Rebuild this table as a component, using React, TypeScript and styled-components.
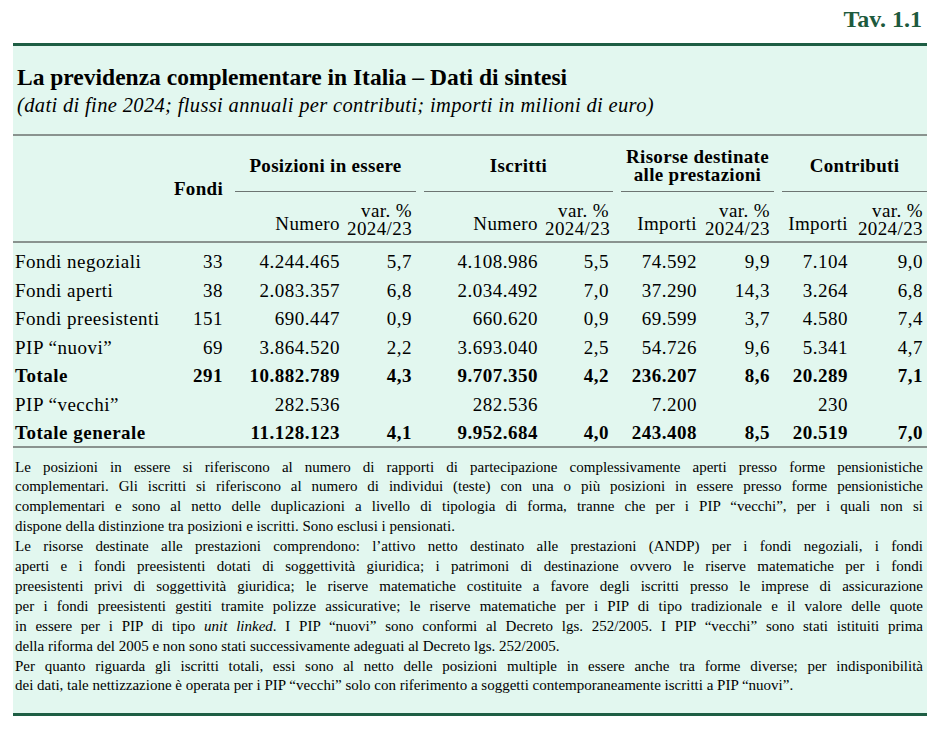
import React from "react";
import styled, { createGlobalStyle } from "styled-components";

const SERIF = `"Liberation Serif", "Times New Roman", Times, serif`;

const Global = createGlobalStyle`
  html, body { margin: 0; padding: 0; background: #ffffff; }
  body { font-family: ${SERIF}; color: #000; }
`;

const Page = styled.div`
  width: 914px;
  margin-left: 13px;
  padding-top: 5px;
  font-family: ${SERIF};
`;

const TavLabel = styled.div`
  text-align: right;
  padding-right: 5px;
  font-size: 24px;
  line-height: 28px;
  font-weight: 700;
  color: #1d5a3d;
  margin-bottom: 10px;
`;

const Panel = styled.section`
  background: #e2f7ef;
  border-top: 3px solid #1e5e44;
  border-bottom: 3px solid #1e5e44;
  padding-top: 18px;
`;

const Heading = styled.div`
  padding: 0 4px;
  margin-bottom: 17px;
`;

const Title = styled.h1`
  margin: 0;
  font-size: 23.5px;
  line-height: 26px;
  font-weight: 700;
`;

const Subtitle = styled.div`
  font-size: 20.5px;
  line-height: 24px;
  font-style: italic;
  letter-spacing: 0.35px;
  margin-top: 3px;
`;

const Table = styled.table`
  width: 914px;
  table-layout: fixed;
  border-collapse: separate;
  border-spacing: 0;
  border-top: 2px solid #8a938f;
  font-family: ${SERIF};
  font-size: 19px;
  letter-spacing: 0.5px;
`;

const GroupRow = styled.tr`
  height: 56px;
`;

const SubRow = styled.tr`
  height: 51px;
`;

const HeadCell = styled.th<{ $align?: "left" | "right" | "center" }>`
  padding: 0 7px 0 0;
  font-weight: 700;
  text-align: ${(p) => p.$align ?? "right"};
  vertical-align: middle;
  letter-spacing: 0.3px;
  border-bottom: 2px solid #8a938f;
`;

const GroupCell = styled.th`
  padding: 0;
  vertical-align: bottom;
  font-weight: 700;
  letter-spacing: 0.3px;
`;

const GroupLabel = styled.div<{ $last?: boolean }>`
  height: 50px;
  margin: 0 ${(p) => (p.$last ? "0" : "3px")} 0 5px;
  border-bottom: 1px solid #6d7572;
  display: flex;
  align-items: center;
  justify-content: center;
  text-align: center;
  line-height: 18px;
`;

const SubCell = styled.th<{ $two?: boolean }>`
  padding: 0 7px ${(p) => (p.$two ? "3px" : "8px")} 0;
  font-weight: 400;
  text-align: right;
  vertical-align: bottom;
  line-height: 18px;
  letter-spacing: 0.4px;
  border-bottom: 2px solid #8a938f;
  &:last-child { padding-right: 4px; }
`;

const DataRow = styled.tr<{ $bold?: boolean }>`
  height: 28.5px;
  font-weight: ${(p) => (p.$bold ? 700 : 400)};
  &:first-child { height: 31.5px; }
  &:first-child td { padding-top: 7px; }
  &:last-child td { border-bottom: 2px solid #8a938f; }
`;

const LabelCell = styled.td`
  padding: 4px 0 0 2px;
  text-align: left;
  white-space: nowrap;
  line-height: 24.5px;
  vertical-align: top;
`;

const NumCell = styled.td`
  padding: 4px 7px 0 0;
  text-align: right;
  white-space: nowrap;
  line-height: 24.5px;
  vertical-align: top;
  &:last-child { padding-right: 4px; }
`;

const Notes = styled.div`
  padding: 10px 4px 17px 2px;
  font-size: 15px;
  line-height: 19.9px;
`;

const NoteLine = styled.span<{ $end?: boolean }>`
  display: block;
  text-align: justify;
  text-align-last: ${(p) => (p.$end ? "left" : "justify")};
  white-space: nowrap;
`;

type Row = { label: string; bold?: boolean; cells: string[] };

const rows: Row[] = [
  { label: "Fondi negoziali", cells: ["33", "4.244.465", "5,7", "4.108.986", "5,5", "74.592", "9,9", "7.104", "9,0"] },
  { label: "Fondi aperti", cells: ["38", "2.083.357", "6,8", "2.034.492", "7,0", "37.290", "14,3", "3.264", "6,8"] },
  { label: "Fondi preesistenti", cells: ["151", "690.447", "0,9", "660.620", "0,9", "69.599", "3,7", "4.580", "7,4"] },
  { label: "PIP “nuovi”", cells: ["69", "3.864.520", "2,2", "3.693.040", "2,5", "54.726", "9,6", "5.341", "4,7"] },
  { label: "Totale", bold: true, cells: ["291", "10.882.789", "4,3", "9.707.350", "4,2", "236.207", "8,6", "20.289", "7,1"] },
  { label: "PIP “vecchi”", cells: ["", "282.536", "", "282.536", "", "7.200", "", "230", ""] },
  { label: "Totale generale", bold: true, cells: ["", "11.128.123", "4,1", "9.952.684", "4,0", "243.408", "8,5", "20.519", "7,0"] },
];

const widths = [154, 63, 117, 72, 126, 71, 88, 73, 78, 72];

const groups: { label: React.ReactNode; sub: string }[] = [
  { label: "Posizioni in essere", sub: "Numero" },
  { label: "Iscritti", sub: "Numero" },
  { label: (<>Risorse destinate<br />alle prestazioni</>), sub: "Importi" },
  { label: "Contributi", sub: "Importi" },
];

const notes: { text: React.ReactNode; end?: boolean }[][] = [
  [
    { text: "Le posizioni in essere si riferiscono al numero di rapporti di partecipazione complessivamente aperti presso forme pensionistiche" },
    { text: "complementari. Gli iscritti si riferiscono al numero di individui (teste) con una o più posizioni in essere presso forme pensionistiche" },
    { text: "complementari e sono al netto delle duplicazioni a livello di tipologia di forma, tranne che per i PIP “vecchi”, per i quali non si" },
    { text: "dispone della distinzione tra posizioni e iscritti. Sono esclusi i pensionati.", end: true },
  ],
  [
    { text: "Le risorse destinate alle prestazioni comprendono: l’attivo netto destinato alle prestazioni (ANDP) per i fondi negoziali, i fondi" },
    { text: "aperti e i fondi preesistenti dotati di soggettività giuridica; i patrimoni di destinazione ovvero le riserve matematiche per i fondi" },
    { text: "preesistenti privi di soggettività giuridica; le riserve matematiche costituite a favore degli iscritti presso le imprese di assicurazione" },
    { text: "per i fondi preesistenti gestiti tramite polizze assicurative; le riserve matematiche per i PIP di tipo tradizionale e il valore delle quote" },
    { text: (<>in essere per i PIP di tipo <i>unit linked</i>. I PIP “nuovi” sono conformi al Decreto lgs. 252/2005. I PIP “vecchi” sono stati istituiti prima</>) },
    { text: "della riforma del 2005 e non sono stati successivamente adeguati al Decreto lgs. 252/2005.", end: true },
  ],
  [
    { text: "Per quanto riguarda gli iscritti totali, essi sono al netto delle posizioni multiple in essere anche tra forme diverse; per indisponibilità" },
    { text: "dei dati, tale nettizzazione è operata per i PIP “vecchi” solo con riferimento a soggetti contemporaneamente iscritti a PIP “nuovi”.", end: true },
  ],
];

export default function App() {
  return (
    <Page>
      <Global />
      <TavLabel>Tav. 1.1</TavLabel>
      <Panel>
        <Heading>
          <Title>La previdenza complementare in Italia – Dati di sintesi</Title>
          <Subtitle>(dati di fine 2024; flussi annuali per contributi; importi in milioni di euro)</Subtitle>
        </Heading>
        <Table>
          <colgroup>
            {widths.map((w, i) => (
              <col key={i} style={{ width: w }} />
            ))}
          </colgroup>
          <thead>
            <GroupRow>
              <HeadCell rowSpan={2} $align="left" />
              <HeadCell rowSpan={2}>Fondi</HeadCell>
              {groups.map((g, i) => (
                <GroupCell key={i} colSpan={2}>
                  <GroupLabel $last={i === groups.length - 1}>
                    <span>{g.label}</span>
                  </GroupLabel>
                </GroupCell>
              ))}
            </GroupRow>
            <SubRow>
              {groups.map((g, i) => (
                <React.Fragment key={i}>
                  <SubCell>{g.sub}</SubCell>
                  <SubCell $two>
                    var. %
                    <br />
                    2024/23
                  </SubCell>
                </React.Fragment>
              ))}
            </SubRow>
          </thead>
          <tbody>
            {rows.map((r) => (
              <DataRow key={r.label} $bold={r.bold}>
                <LabelCell>{r.label}</LabelCell>
                {r.cells.map((c, i) => (
                  <NumCell key={i}>{c}</NumCell>
                ))}
              </DataRow>
            ))}
          </tbody>
        </Table>
        <Notes>
          {notes.map((para, pi) => (
            <div key={pi}>
              {para.map((l, li) => (
                <NoteLine key={li} $end={l.end}>
                  {l.text}
                </NoteLine>
              ))}
            </div>
          ))}
        </Notes>
      </Panel>
    </Page>
  );
}
